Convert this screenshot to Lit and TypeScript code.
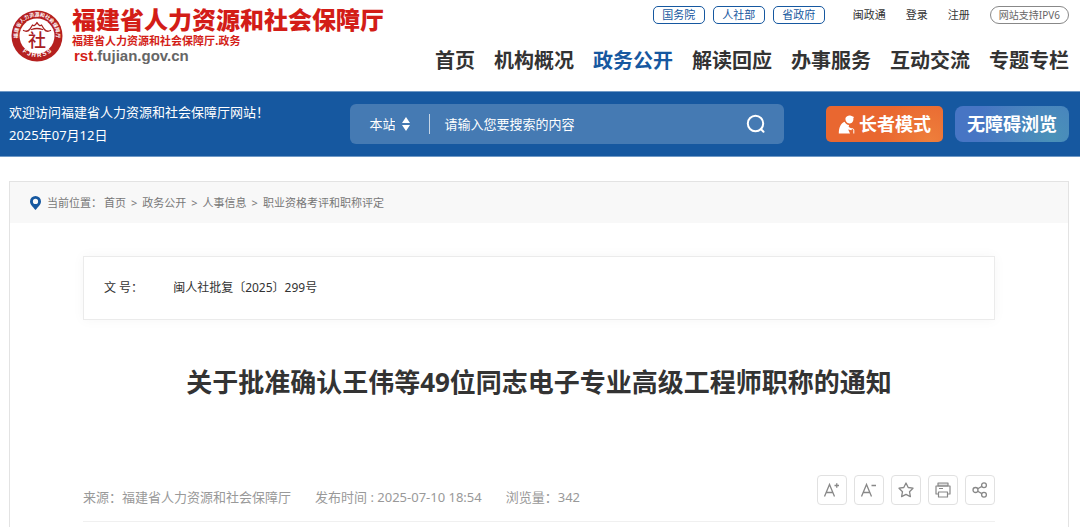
import { LitElement, html, css } from "lit";
import { customElement, state } from "lit/decorators.js";

@customElement("site-seal")
class SiteSeal extends LitElement {
  static styles = css`
    :host { display: block; }
    svg { display: block; width: 52px; height: 52px; }
    .ring { font: 700 5px "Noto Sans CJK SC", sans-serif; fill: #fff; }
    .latin { font: 700 6px "Liberation Sans", sans-serif; fill: #fff; }
    .core { font: 500 18px "Noto Sans CJK SC", sans-serif; fill: #a8201f; }
  `;
  render() {
    return html`<svg viewBox="0 0 52 52" role="img" aria-label="福建省人力资源和社会保障厅">
      <defs>
        <path id="upper" d="M7.500 30.500A19.200 19.200 0 1 1 44.500 30.500" />
        <path id="lower" d="M6 35A22.600 22.600 0 0 0 46 35" />
      </defs>
      <circle cx="26" cy="26" r="25.500" fill="#b5201f" />
      <circle cx="26" cy="26" r="17.500" fill="#fff" />
      <text class="ring"><textPath href="#upper" startOffset="50%" text-anchor="middle">福建省人力资源和社会保障厅</textPath></text>
      <text class="latin"><textPath href="#lower" startOffset="50%" text-anchor="middle">F J H R S S</textPath></text>
      <path d="M12.500 20.500c2.500 1.300 5 .5 6.500-1.500l2.500-4 1.500.8c1.500-.8 2.300-1.800 3-3.300.7 1.500 1.500 2.500 3 3.300l1.500-.8 2.500 4c1.500 2 4 2.800 6.500 1.500M20.500 19.500c3.500-1.300 7.500-1.300 11 0" fill="none" stroke="#a8201f" stroke-width="1.300" stroke-linecap="round" stroke-linejoin="round" />
      <text class="core" x="26" y="37" text-anchor="middle">社</text>
    </svg>`;
  }
}

@customElement("app-root")
class AppRoot extends LitElement {
  @state() query = "";

  nav = ["首页", "机构概况", "政务公开", "解读回应", "办事服务", "互动交流", "专题专栏"];
  trail = ["首页", "政务公开", "人事信息", "职业资格考评和职称评定"];

  static styles = css`
    :host {
      display: flex;
      flex-direction: column;
      min-height: 100vh;
      background: #fff;
      color: #333;
      font: 13px/20px "Noto Sans", "Noto Sans CJK SC", sans-serif;
    }
    * { box-sizing: border-box; }
    a { color: inherit; text-decoration: none; }
    button, input, select { font: inherit; color: inherit; margin: 0; padding: 0; border: 0; background: none; }
    button { cursor: pointer; }
    svg { display: block; flex: none; }

    .header { display: flex; justify-content: space-between; padding: 6px 11px 0; height: 91px; }
    .brand { display: flex; gap: 9px; padding-top: 4px; align-items: flex-start; }
    .names { display: flex; flex-direction: column; margin-top: -6px; color: #d31d17; white-space: nowrap; }
    .name { font: 900 24px/30px "Noto Sans CJK SC", sans-serif; }
    .sub { font: 700 11px/13px "Noto Sans CJK SC", sans-serif; }
    .domain { font: 700 15px/18px "Liberation Sans", sans-serif; color: #666; padding-left: 2px; }
    .domain b { color: #d31d17; }
    .side { display: flex; flex-direction: column; align-items: flex-end; gap: 22px; }
    .links { display: flex; align-items: center; font-size: 11px; line-height: 16px; white-space: nowrap; }
    .gov { display: flex; gap: 8px; margin-right: 28px; }
    .gov a { border: 1px solid #1658a0; border-radius: 5px; color: #1658a0; width: 52px; text-align: center; }
    .user { display: flex; gap: 20px; margin-right: 20px; }
    .ipv6 { border: 1px solid #888; border-radius: 9px; color: #666; font-size: 10px; padding: 0 8px; }
    .nav { display: flex; gap: 19px; font-size: 20px; line-height: 30px; font-weight: 700; white-space: nowrap; }
    .nav .current { color: #1658a0; }

    .banner {
      display: grid; grid-template-columns: 6fr 434px 5fr; align-items: center;
      padding: 0 11px 0 9px; height: 66px; background: #1658a0; color: #fff;
      border-top: 1px solid #6f99c6; border-bottom: 1px solid #6f99c6;
    }
    .welcome { line-height: 23px; white-space: nowrap; }
    .search { display: flex; align-items: center; height: 40px; padding: 0 18px 0 19px; border-radius: 6px; background: #457ab3; }
    .scope { appearance: none; width: 26px; outline: 0; }
    .arrows { margin-left: 7px; }
    .rule { width: 1px; height: 20px; margin: 0 14px 0 19px; background: #c5d5e6; }
    .box { flex: 1; min-width: 0; outline: 0; }
    .box::placeholder { color: #fff; opacity: 1; }
    .modes { display: flex; justify-content: flex-end; gap: 12px; }
    .mode { display: flex; align-items: center; justify-content: center; gap: 4px; height: 36px; border-radius: 5px; font-size: 18px; font-weight: 700; white-space: nowrap; }
    .elder { width: 117px; background: radial-gradient(circle at 88% 100%, #ee7f3c, #e96730 45%); }
    .access { width: 114px; border-radius: 8px; background: radial-gradient(circle at 85% 85%, #4a92b8, #4775c4 75%); }

    .main { flex: 1; margin: 24px 11px 0 9px; border: 1px solid #e3e3e3; border-bottom: 0; }
    .trail { display: flex; align-items: center; height: 41px; padding-left: 20px; background: #f8f8f8; color: #777; font-size: 11px; }
    .trail ol { display: flex; margin: 0; padding: 0; list-style: none; }
    .trail li + li::before { content: ">"; margin: 0 5px; }
    .here { margin: 0 2px 0 6px; }
    .article { padding: 33px 73px 0; }
    .facts { display: flex; gap: 30px; align-items: center; height: 64px; margin: 0; padding: 0 20px; border: 1px solid #ebebeb; box-shadow: 0 0 12px #0000000a; font-size: 12px; }
    .facts dd { margin: 0; }
    .title { margin: 43px 0 0; font-size: 26px; line-height: 38px; text-align: center; }
    .meta { display: flex; justify-content: space-between; align-items: flex-start; margin-top: 74px; padding-bottom: 14px; border-bottom: 1px solid #f0f0f0; color: #999; }
    .source { display: flex; gap: 24px; padding-top: 12px; }
    .tools { display: flex; gap: 7px; }
    .tool { display: grid; place-items: center; width: 30px; height: 30px; border: 1px solid #e1e1e1; border-radius: 4px; }
  `;

  render() {
    return html`
      <header class="header">
        <div class="brand">
          <site-seal></site-seal>
          <div class="names">
            <span class="name">福建省人力资源和社会保障厅</span>
            <span class="sub">福建省人力资源和社会保障厅.政务</span>
            <span class="domain"><b>rst</b>.fujian.gov.cn</span>
          </div>
        </div>
        <div class="side">
          <div class="links">
            <div class="gov"><a href="#">国务院</a><a href="#">人社部</a><a href="#">省政府</a></div>
            <div class="user"><a href="#">闽政通</a><a href="#">登录</a><a href="#">注册</a></div>
            <a class="ipv6" href="#">网站支持IPV6</a>
          </div>
          <nav class="nav">
            ${this.nav.map((n) => html`<a href="#" class=${n === "政务公开" ? "current" : ""}>${n}</a>`)}
          </nav>
        </div>
      </header>

      <section class="banner">
        <div class="welcome">欢迎访问福建省人力资源和社会保障厅网站！<br />2025年07月12日</div>
        <form class="search" @submit=${(e: Event) => e.preventDefault()}>
          <select class="scope" aria-label="搜索范围"><option>本站</option></select>
          <svg class="arrows" width="8" height="14" viewBox="0 0 8 14" fill="#fff"><path d="M4 0l4 6H0zM4 14l4-6H0z" /></svg>
          <span class="rule"></span>
          <input class="box" type="text" aria-label="搜索" placeholder="请输入您要搜索的内容" .value=${this.query}
            @input=${(e: Event) => (this.query = (e.target as HTMLInputElement).value)} />
          <button type="submit" aria-label="搜索">
            <svg width="20" height="20" viewBox="0 0 20 20" fill="none" stroke="#fff" stroke-width="2" stroke-linecap="round"><circle cx="9.500" cy="9.500" r="7.700" /><path d="M15 15.200l2.500 2.500" /></svg>
          </button>
        </form>
        <div class="modes">
          <button class="mode elder">
            <svg width="17" height="19" viewBox="0 0 17 19" fill="#fff"><path d="M7.500 3C8.500.8 11 0 13 .8l3 1.200-.7 1.200c.5 2.500-1 5-3.500 5.200C9 8.500 7 6 7.500 3z" /><path d="M.8 18.500C.8 13 2.500 8.500 6.500 6.800c1 2 2.500 3 4.500 3.200l-.3 2 3.300 1.800-.6 1.400-3.200-.7 1.800 4z" /><path d="M12.500 14.200c1.800-1 3.300-.6 3.300 1v3.300" fill="none" stroke="#fff" /></svg>
            长者模式
          </button>
          <button class="mode access">无障碍浏览</button>
        </div>
      </section>

      <main class="main">
        <nav class="trail">
          <svg width="11" height="14" viewBox="0 0 11 14"><path fill="#1658a0" fill-rule="evenodd" d="M5.500 0A5.500 5.500 0 0 1 11 5.500C11 8.500 8 11 5.500 14 3 11 0 8.500 0 5.500A5.500 5.500 0 0 1 5.500 0zm0 2.800a2.600 2.600 0 1 0 0 5.200 2.600 2.600 0 0 0 0-5.200z" /></svg>
          <span class="here">当前位置：</span>
          <ol>${this.trail.map((t) => html`<li><a href="#">${t}</a></li>`)}</ol>
        </nav>
        <article class="article">
          <dl class="facts"><dt>文 号：</dt><dd>闽人社批复〔2025〕299号</dd></dl>
          <h1 class="title">关于批准确认王伟等49位同志电子专业高级工程师职称的通知</h1>
          <div class="meta">
            <div class="source">
              <span>来源：福建省人力资源和社会保障厅</span>
              <span>发布时间 : 2025-07-10 18:54</span>
              <span>浏览量：342</span>
            </div>
            <div class="tools">
              <button class="tool" aria-label="放大字体"><svg width="18" height="18" viewBox="0 0 18 18" fill="none" stroke="#888" stroke-width="1.300"><path d="M1.500 15.500L6.500 3.500l5 12M3.300 11.500h6.400M11.500 4.500h4.500M13.750 2.200v4.600" /></svg></button>
              <button class="tool" aria-label="缩小字体"><svg width="18" height="18" viewBox="0 0 18 18" fill="none" stroke="#888" stroke-width="1.300"><path d="M1.500 15.500L6.500 3.500l5 12M3.300 11.500h6.400M11.500 4.500h4.500" /></svg></button>
              <button class="tool" aria-label="收藏"><svg width="18" height="18" viewBox="0 0 18 18" fill="none" stroke="#888" stroke-width="1.300" stroke-linejoin="round"><path d="M9 2l2.200 4.500 4.800.7-3.500 3.500.9 4.900L9 13.300l-4.400 2.300.9-4.900L2 7.200l4.800-.7z" /></svg></button>
              <button class="tool" aria-label="打印"><svg width="18" height="18" viewBox="0 0 18 18" fill="none" stroke="#888" stroke-width="1.200" stroke-linejoin="round"><path d="M4 5V2h10v3z" fill="#ddd" /><path d="M4.500 13H2V5h14v8h-2.500M4.500 11h9v5h-9zM5 7.500h4" /></svg></button>
              <button class="tool" aria-label="分享"><svg width="18" height="18" viewBox="0 0 18 18" fill="none" stroke="#888" stroke-width="1.300"><circle cx="4.500" cy="9" r="2.500" /><circle cx="13" cy="4.200" r="2.400" /><circle cx="13" cy="13.800" r="2.400" /><path d="M6.700 7.800l4.200-2.400M6.700 10.200l4.200 2.400" /></svg></button>
            </div>
          </div>
        </article>
      </main>
    `;
  }
}
